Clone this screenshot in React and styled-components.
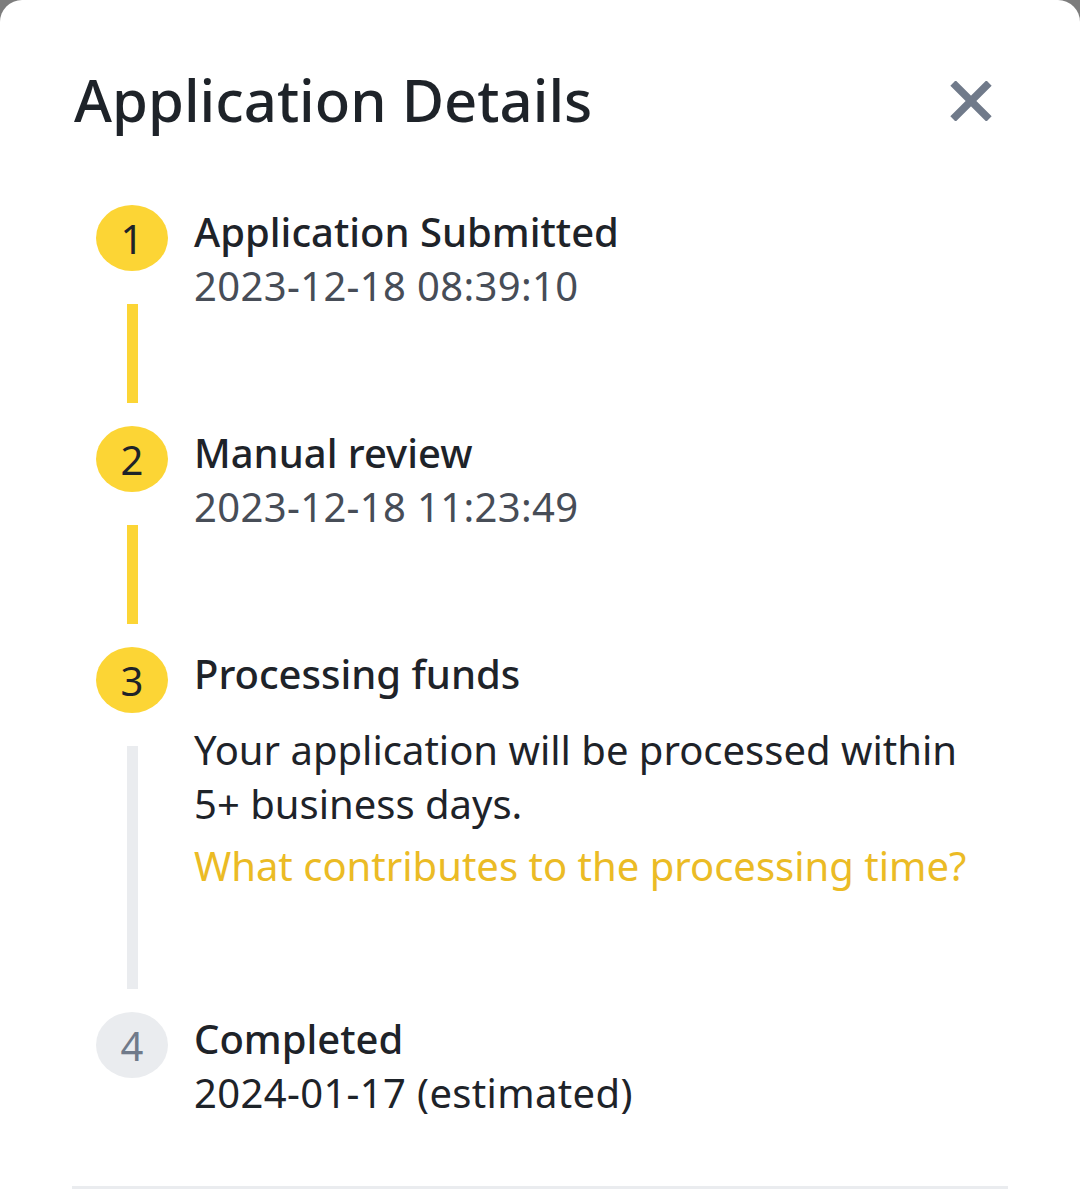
import React from 'react'
import styled, { createGlobalStyle } from 'styled-components'

const GlobalStyle = createGlobalStyle`
  html, body {
    margin: 0;
    padding: 0;
    background: #7d7d7d;
  }
  body {
    font-family: "Noto Sans", "Open Sans", sans-serif;
    color: #1e2329;
  }
`

const Sheet = styled.div`
  width: 1080px;
  height: 1200px;
  box-sizing: border-box;
  background: #fff;
  border-radius: 22px 22px 0 0;
  padding: 60px 72px 0 74px;
  display: flex;
  flex-direction: column;
`

const Header = styled.div`
  display: flex;
  align-items: center;
  justify-content: space-between;
  margin-bottom: 65px;
`

const Title = styled.h2`
  margin: 0;
  font-size: 58px;
  font-weight: 500;
  line-height: 80px;
  color: #1e2329;
`

const CloseButton = styled.button`
  border: 0;
  background: none;
  padding: 0;
  width: 48px;
  height: 48px;
  display: flex;
  align-items: center;
  justify-content: center;
  cursor: pointer;
  margin-right: 13px;
  margin-top: 2px;
`

const Steps = styled.div`
  display: flex;
  flex-direction: column;
  padding-left: 22px;
`

const Step = styled.div`
  display: flex;
  gap: 26px;
`

const Rail = styled.div`
  width: 72px;
  display: flex;
  flex-direction: column;
  align-items: center;
`

const Dot = styled.div`
  width: 72px;
  height: 66px;
  border-radius: 50%;
  flex-shrink: 0;
  display: flex;
  align-items: center;
  justify-content: center;
  font-size: 40px;
  background: ${p => (p.$done ? '#fcd535' : '#eaecef')};
  color: ${p => (p.$done ? '#1e2329' : '#707a8a')};
`

const Line = styled.div`
  width: 11px;
  flex: 1;
  margin: 33px 0 23px;
  background: ${p => (p.$done ? '#fcd535' : '#eaecef')};
`

const Body = styled.div`
  flex: 1;
  padding-bottom: ${p => p.$pad || 0}px;
`

const StepTitle = styled.div`
  font-size: 40px;
  font-weight: 500;
  line-height: 54px;
  color: #1e2329;
`

const StepMeta = styled.div`
  font-size: 40px;
  line-height: 54px;
  letter-spacing: 0.35px;
  color: ${p => (p.$dark ? '#1e2329' : '#474d57')};
`

const Note = styled.p`
  margin: 22px 0 0;
  font-size: 40px;
  line-height: 54px;
  color: #1e2329;
`

const HelpLink = styled.a`
  display: block;
  margin-top: 8px;
  font-size: 40px;
  line-height: 54px;
  color: #ebbb25;
  text-decoration: none;
`

const Divider = styled.div`
  margin-top: auto;
  margin-bottom: 11px;
  height: 3px;
  margin-left: -2px;
  background: #eaecef;
`

const CloseIcon = () => (
  <svg width="44" height="40" viewBox="0 0 44 40">
    <path d="M4 2 L40 38 M40 2 L4 38" stroke="#707a8a" strokeWidth="7.5" />
  </svg>
)

const steps = [
  { n: 1, title: 'Application Submitted', meta: '2023-12-18 08:39:10', done: true, line: 'done', pad: 113 },
  { n: 2, title: 'Manual review', meta: '2023-12-18 11:23:49', done: true, line: 'done', pad: 113 },
  { n: 3, title: 'Processing funds', done: true, line: 'pending', pad: 119 },
  { n: 4, title: 'Completed', meta: '2024-01-17 (estimated)', done: false, pad: 0 }
]

export default function App () {
  return (
    <>
      <GlobalStyle />
      <Sheet>
        <Header>
          <Title>Application Details</Title>
          <CloseButton aria-label='Close'>
            <CloseIcon />
          </CloseButton>
        </Header>
        <Steps>
          {steps.map(step => (
            <Step key={step.n}>
              <Rail>
                <Dot $done={step.done}>{step.n}</Dot>
                {step.line && <Line $done={step.line === 'done'} />}
              </Rail>
              <Body $pad={step.pad}>
                <StepTitle>{step.title}</StepTitle>
                {step.meta && <StepMeta $dark={!step.done}>{step.meta}</StepMeta>}
                {step.n === 3 && (
                  <>
                    <Note>Your application will be processed within<br />5+ business days.</Note>
                    <HelpLink href='#'>What contributes to the processing time?</HelpLink>
                  </>
                )}
              </Body>
            </Step>
          ))}
        </Steps>
        <Divider />
      </Sheet>
    </>
  )
}
